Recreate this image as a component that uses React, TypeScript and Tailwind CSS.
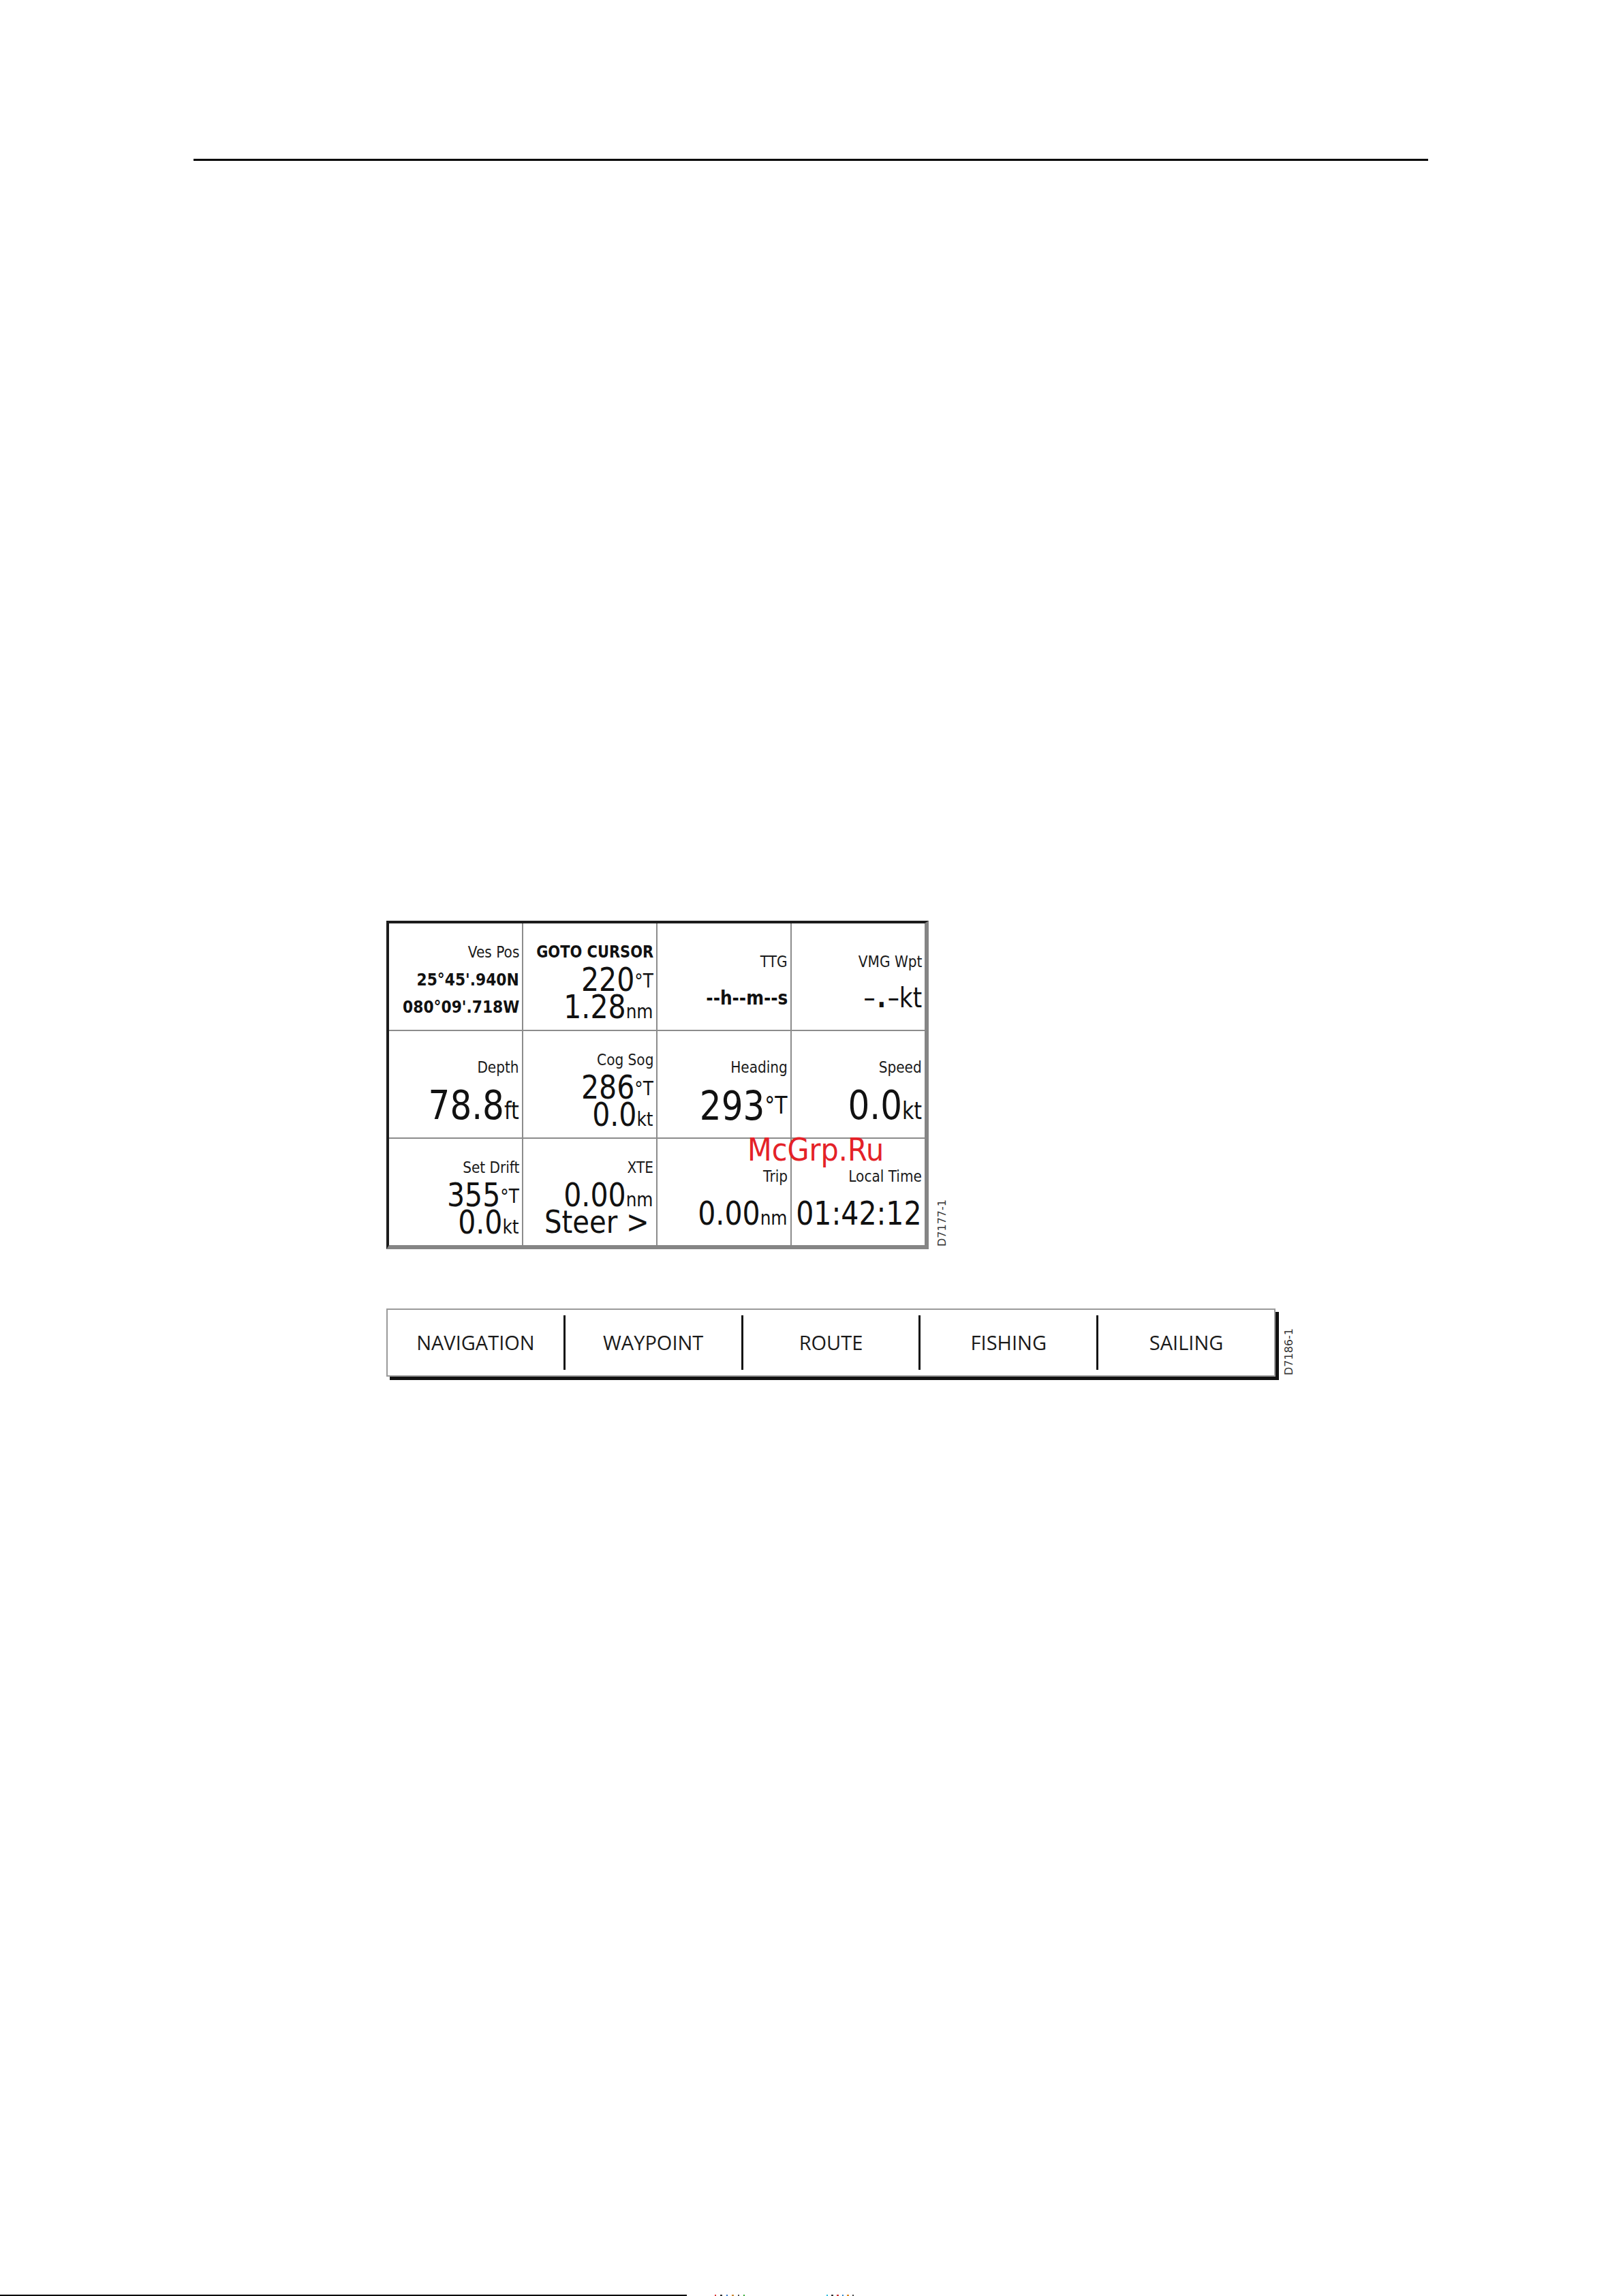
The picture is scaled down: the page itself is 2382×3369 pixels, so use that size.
import React from "react";

const F = "font-['DejaVu_Sans',sans-serif]";

function Line({ children, h = 40, className = "" }: { children: React.ReactNode; h?: number; className?: string }) {
  return (
    <div
      className={`whitespace-nowrap text-[#111] ${className}`}
      style={{ height: h, lineHeight: `${h}px` }}
    >
      <span className="inline-block origin-right scale-x-[0.855]">{children}</span>
    </div>
  );
}

function Label({ children }: { children: React.ReactNode }) {
  return (
    <Line>
      <span className="text-[23.5px] text-[#1a1a1a]">{children}</span>
    </Line>
  );
}

function Med({ v, u, className = "" }: { v: string; u?: string; className?: string }) {
  return (
    <Line className={className}>
      <span className="text-[48px]">{v}</span>
      {u && <span className={`text-[29px] ${u === "°T" ? "align-[5px]" : ""}`}>{u}</span>}
    </Line>
  );
}

function Big({ v, u }: { v: string; u: string }) {
  return (
    <Line h={60}>
      <span className="text-[58.5px]">{v}</span>
      <span className={`text-[35px] ${u === "°T" ? "align-[9px]" : ""}`}>{u}</span>
    </Line>
  );
}

function Cell({ children, gap = 0, pt = 8 }: { children: React.ReactNode; gap?: number; pt?: number }) {
  return (
    <div className="bg-white flex flex-col items-end justify-center pr-1" style={{ gap, paddingTop: pt }}>
      {children}
    </div>
  );
}

export default function App() {
  return (
    <div className={`w-[2382px] h-[3369px] bg-white flex flex-col relative overflow-hidden ${F}`}>
      {/* top rule */}
      <div className="ml-[284px] mt-[233px] w-[1812px] h-[3px] bg-black" />

      {/* data table */}
      <div className="ml-[567px] mt-[1115px] flex flex-row items-end">
        <div className="relative w-[796px] h-[482px] border-l-4 border-t-4 border-l-[#1c1c1c] border-t-[#1c1c1c] border-r-[6px] border-b-[6px] border-r-[#858585] border-b-[#858585] bg-[#8c8c8c]">
          <div className="grid grid-cols-4 grid-rows-3 gap-[2px] w-full h-full">
            {/* row 1 */}
            <Cell>
              <Label>Ves Pos</Label>
              <Line><span className="text-[25.5px] font-bold">25°45'.940N</span></Line>
              <Line><span className="text-[25.5px] font-bold">080°09'.718W</span></Line>
            </Cell>
            <Cell>
              <Line><span className="text-[24.5px] font-bold">GOTO CURSOR</span></Line>
              <Med v="220" u="°T" />
              <Med v="1.28" u="nm" />
            </Cell>
            <Cell gap={13}>
              <Label>TTG</Label>
              <Line><span className="text-[29px] font-bold">--h--m--s</span></Line>
            </Cell>
            <Cell gap={13}>
              <Label>VMG Wpt</Label>
              <Line>
                <span className="text-[40px]">–</span>
                <span className="text-[40px] font-bold mx-[3px]">.</span>
                <span className="text-[40px]">–kt</span>
              </Line>
            </Cell>

            {/* row 2 */}
            <Cell gap={6} pt={16}>
              <Label>Depth</Label>
              <Big v="78.8" u="ft" />
            </Cell>
            <Cell>
              <Label>Cog Sog</Label>
              <Med v="286" u="°T" />
              <Med v="0.0" u="kt" />
            </Cell>
            <Cell gap={6} pt={16}>
              <Label>Heading</Label>
              <Big v="293" u="°T" />
            </Cell>
            <Cell gap={6} pt={16}>
              <Label>Speed</Label>
              <Big v="0.0" u="kt" />
            </Cell>

            {/* row 3 */}
            <Cell>
              <Label>Set Drift</Label>
              <Med v="355" u="°T" />
              <Med v="0.0" u="kt" />
            </Cell>
            <Cell>
              <Label>XTE</Label>
              <Med v="0.00" u="nm" />
              <Line className="pr-[6px]">
                <span className="text-[47px]">Steer &gt;</span>
              </Line>
            </Cell>
            <Cell gap={14}>
              <Label>Trip</Label>
              <Med v="0.00" u="nm" />
            </Cell>
            <Cell gap={14}>
              <Label>Local Time</Label>
              <Med v="01:42:12" />
            </Cell>
          </div>

          {/* watermark overlay */}
          <div className="absolute left-[526px] top-[309px] text-[46px] leading-[46px] text-[#e42228] whitespace-nowrap origin-left scale-x-[0.9]">
            McGrp.Ru
          </div>
        </div>
        <div className="ml-[13px] mb-[4px] [writing-mode:vertical-rl] rotate-180 text-[16px] leading-[14px] text-[#333]">
          D7177-1
        </div>
      </div>

      {/* soft key bar */}
      <div className="ml-[567px] mt-[87px] flex flex-row items-end">
        <div className="w-[1305px] h-[100px] border-2 border-[#9a9a9a] bg-white shadow-[5px_5px_0_#111] flex flex-row items-stretch font-['Open_Sans',sans-serif] text-[29px] text-[#1a1a1a]">
          <div className="flex-1 flex items-center justify-center">NAVIGATION</div>
          <div className="w-[3px] bg-[#111] my-[8px]" />
          <div className="flex-1 flex items-center justify-center">WAYPOINT</div>
          <div className="w-[3px] bg-[#111] my-[8px]" />
          <div className="flex-1 flex items-center justify-center">ROUTE</div>
          <div className="w-[3px] bg-[#111] my-[8px]" />
          <div className="flex-1 flex items-center justify-center">FISHING</div>
          <div className="w-[3px] bg-[#111] my-[8px]" />
          <div className="flex-1 flex items-center justify-center">SAILING</div>
        </div>
        <div className="ml-[13px] mb-[2px] [writing-mode:vertical-rl] rotate-180 text-[16px] leading-[14px] text-[#333]">
          D7186-1
        </div>
      </div>

      {/* bottom edge artifacts */}
      <div className="mt-auto flex flex-row items-end h-[2px]">
        <div className="w-[1008px] h-[2px] bg-black" />
        <div className="ml-[41px] flex flex-row gap-[6px] h-[2px]">
          <div className="w-[2px] h-[2px] bg-[#d33]" />
          <div className="w-[3px] h-[2px] bg-[#333]" />
          <div className="w-[2px] h-[2px] bg-[#37c]" />
          <div className="w-[3px] h-[2px] bg-[#c83]" />
          <div className="w-[2px] h-[2px] bg-[#555]" />
          <div className="w-[2px] h-[2px] bg-[#3a3]" />
        </div>
        <div className="ml-[120px] flex flex-row gap-[5px] h-[2px]">
          <div className="w-[2px] h-[2px] bg-[#2bd]" />
          <div className="w-[3px] h-[2px] bg-[#333]" />
          <div className="w-[3px] h-[2px] bg-[#c33]" />
          <div className="w-[2px] h-[2px] bg-[#38c]" />
          <div className="w-[3px] h-[2px] bg-[#d82]" />
          <div className="w-[2px] h-[2px] bg-[#444]" />
        </div>
      </div>
    </div>
  );
}
